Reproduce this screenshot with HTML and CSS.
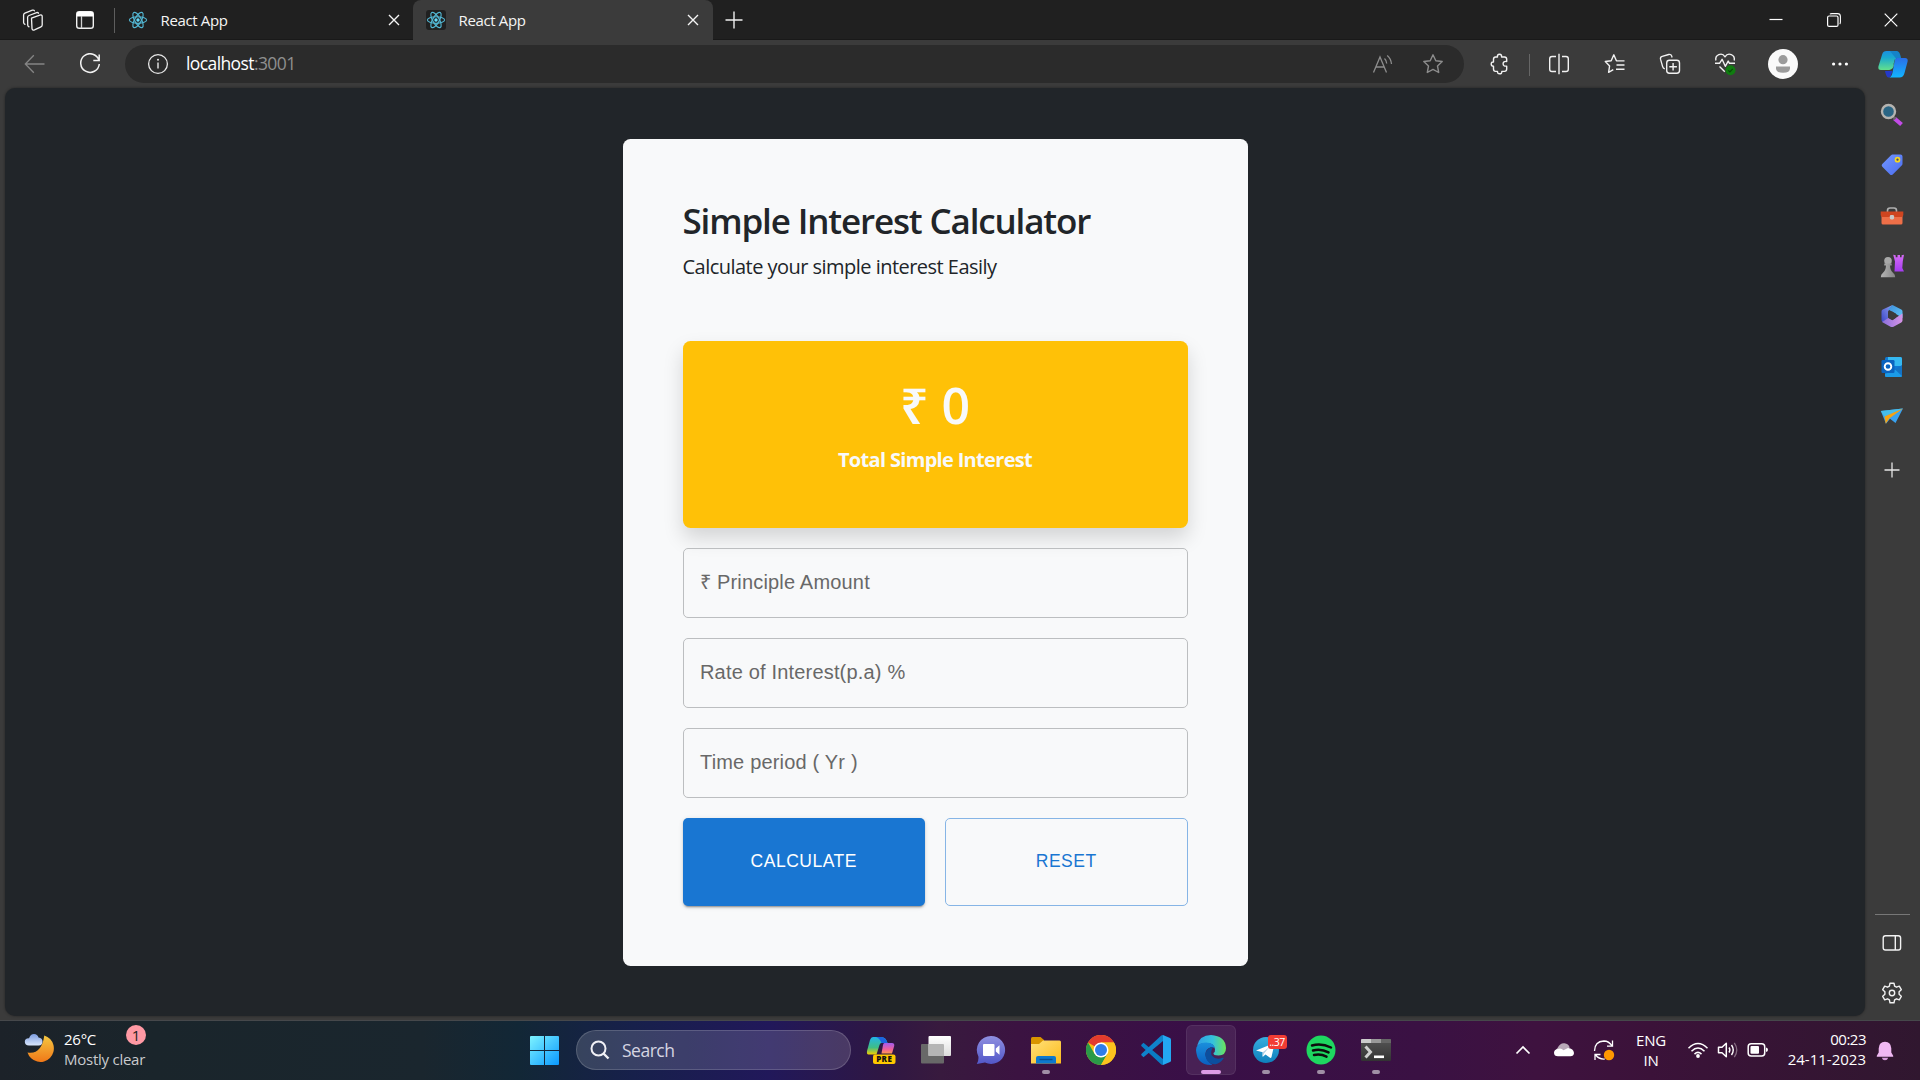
FILE: index.html
```html
<!DOCTYPE html>
<html lang="en">
<head>
<meta charset="utf-8">
<title>React App</title>
<link rel="stylesheet" href="styles.css">
</head>
<body>
<svg class="defs" width="0" height="0" aria-hidden="true">
  <defs>
    <linearGradient id="g-teal" x1="0" y1="0" x2="0" y2="1"><stop offset="0" stop-color="#1a8fe0"/><stop offset=".35" stop-color="#19a9cf"/><stop offset="1" stop-color="#63e08c"/></linearGradient>
    <linearGradient id="g-blue" x1="0" y1="0" x2="0" y2="1"><stop offset="0" stop-color="#2a6ee8"/><stop offset="1" stop-color="#12b5ff"/></linearGradient>
    <linearGradient id="g-pink" x1="0" y1="0" x2="0" y2="1"><stop offset="0" stop-color="#a25bf0"/><stop offset=".6" stop-color="#f0609a"/><stop offset="1" stop-color="#ff9a52"/></linearGradient>
    <linearGradient id="g-rain" x1="0" y1="0" x2="0" y2="1"><stop offset="0" stop-color="#22b5e8"/><stop offset=".6" stop-color="#3fbd86"/><stop offset="1" stop-color="#f5d000"/></linearGradient>
    <linearGradient id="g-win" x1="0" y1="0" x2="1" y2="1"><stop offset="0" stop-color="#7df3ff"/><stop offset="1" stop-color="#0a98ff"/></linearGradient>
    <linearGradient id="g-moon" x1="0" y1="0" x2="0" y2="1"><stop offset="0" stop-color="#f5c842"/><stop offset="1" stop-color="#f07818"/></linearGradient>
    <linearGradient id="g-cloud" x1="0" y1="0" x2="0" y2="1"><stop offset="0" stop-color="#7d9de0"/><stop offset="1" stop-color="#d9e6fb"/></linearGradient>
    <linearGradient id="g-tag" x1="0" y1="0" x2="1" y2="1"><stop offset="0" stop-color="#7397ff"/><stop offset="1" stop-color="#4a6cf0"/></linearGradient>
    <linearGradient id="g-pawn" x1="0" y1="0" x2="1" y2="0"><stop offset="0" stop-color="#b5b5b5"/><stop offset="1" stop-color="#858585"/></linearGradient>
    <linearGradient id="g-rook" x1="0" y1="0" x2="0" y2="1"><stop offset="0" stop-color="#d66cf5"/><stop offset="1" stop-color="#a43cf0"/></linearGradient>
    <linearGradient id="g-chat" x1="0" y1="0" x2="0" y2="1"><stop offset="0" stop-color="#8f8fe0"/><stop offset="1" stop-color="#5257c8"/></linearGradient>
    <linearGradient id="g-folder" x1="0" y1="0" x2="1" y2="1"><stop offset="0" stop-color="#ffe07a"/><stop offset="1" stop-color="#fcbc1c"/></linearGradient>
    <linearGradient id="g-edge" x1="0" y1="0" x2="1" y2="0"><stop offset="0" stop-color="#2f9fe6"/><stop offset=".55" stop-color="#35c2dc"/><stop offset="1" stop-color="#6ce35a"/></linearGradient>
    <linearGradient id="g-edge2" x1="0" y1="0" x2="0" y2="1"><stop offset="0" stop-color="#1a8fdc"/><stop offset="1" stop-color="#0a5fc0"/></linearGradient>
    <linearGradient id="g-tg" x1="0" y1="0" x2="0" y2="1"><stop offset="0" stop-color="#38aede"/><stop offset="1" stop-color="#0e80bd"/></linearGradient>
    <linearGradient id="g-term" x1="0" y1="0" x2="0" y2="1"><stop offset="0" stop-color="#555"/><stop offset="1" stop-color="#333"/></linearGradient>
    <linearGradient id="g-white" x1="0" y1="0" x2="0" y2="1"><stop offset="0" stop-color="#fff"/><stop offset="1" stop-color="#dcdcdc"/></linearGradient>
    <linearGradient id="g-m1" x1="0" y1="1" x2="1" y2="0"><stop offset="0" stop-color="#3b46c8"/><stop offset="1" stop-color="#8fa0ee"/></linearGradient>
    <linearGradient id="g-m2" x1="0" y1="0" x2="1" y2="1"><stop offset="0" stop-color="#3c8ddc"/><stop offset="1" stop-color="#62c8f6"/></linearGradient>
    <linearGradient id="g-m3" x1="0" y1="0" x2="1" y2="0"><stop offset="0" stop-color="#8a6fdc"/><stop offset="1" stop-color="#d694e6"/></linearGradient>
    <symbol id="react" viewBox="0 0 20 20">
      <g fill="none" stroke="#53b7d3" stroke-width="1.15"><ellipse cx="10" cy="10" rx="8.6" ry="3.3"/><ellipse cx="10" cy="10" rx="8.6" ry="3.3" transform="rotate(60 10 10)"/><ellipse cx="10" cy="10" rx="8.6" ry="3.3" transform="rotate(120 10 10)"/></g>
      <circle cx="10" cy="10" r="1.7" fill="#61dafb"/>
    </symbol>
    <symbol id="close" viewBox="0 0 12 12"><path d="M1 1l10 10M11 1L1 11" fill="none" stroke="currentColor" stroke-width="1.4"/></symbol>
    <symbol id="star" viewBox="0 0 22 22"><path d="M11 1.8l2.8 5.9 6.4.8-4.7 4.5 1.2 6.5L11 16.4l-5.7 3.1 1.2-6.5L1.8 8.500l6.400-.8z" fill="none" stroke="#8d8d8d" stroke-width="1.4" stroke-linejoin="round"/></symbol>
  </defs>
</svg>

<header class="tabstrip">
  <div class="cell strip-a"><svg width="22" height="22" viewBox="0 0 22 22"><g fill="none" stroke="#f0f0f0" stroke-width="1.3" stroke-linejoin="round" stroke-linecap="round"><path d="M9.500 9.200l8.300-3.100q2.400-.6 2.400 1.500v8.300q0 1.400-1.300 2l-6.400 2.900q-2.200.8-2.500-1.200z"/><path d="M7 17.800q-1.200-.5-1.300-1.700L5.600 8.500q0-1.400 1.400-2L14.600 3.600q1.300-.3 1.900.6"/><path d="M3 15.300q-1.300-.5-1.400-1.800V6q0-1.300 1.300-1.900L10.400 1.200q1.500-.4 2 .6"/></g></svg></div>
  <div class="cell strip-b"><svg width="20" height="20" viewBox="0 0 20 20"><rect x="1.700" y="1.700" width="16.600" height="16.600" rx="2.600" fill="none" stroke="#f0f0f0" stroke-width="1.400"/><path d="M1.700 6.500V4q0-2.300 2.300-2.300h12q2.300 0 2.300 2.300v2.500z" fill="#fff"/><path d="M6.500 6v12" stroke="#cfcfcf" stroke-width="1.300"/></svg></div>
  <i class="strip-line"></i>
  <div class="tab">
    <span class="favicon"><svg width="20" height="20"><use href="#react"/></svg></span>
    <span class="tab-name">React App</span>
    <svg class="tab-x" width="12" height="12"><use href="#close"/></svg>
  </div>
  <div class="tab active">
    <span class="favicon"><svg width="20" height="20"><use href="#react"/></svg></span>
    <span class="tab-name">React App</span>
    <svg class="tab-x" width="12" height="12"><use href="#close"/></svg>
  </div>
  <div class="cell new-tab"><svg width="18" height="18"><path d="M9 .5v17M.5 9h17" stroke="#f0f0f0" stroke-width="1.4"/></svg></div>
  <div class="win-buttons">
    <svg width="14" height="14"><path d="M.5 6.500h13" stroke="#fff" stroke-width="1.200"/></svg>
    <svg width="14" height="14"><rect x=".6" y="3" width="10.400" height="10.400" rx="1.500" fill="none" stroke="#fff" stroke-width="1.200"/><path d="M3 1.200Q3.300.6 5 .6h5.500q2.900 0 2.900 2.900V9q0 1.500-.7 2" fill="none" stroke="#fff" stroke-width="1.100"/></svg>
    <svg width="14" height="14"><path d="M.7.7l12.600 12.600M13.300.7L.7 13.300" stroke="#fff" stroke-width="1.200"/></svg>
  </div>
</header>

<nav class="toolbar">
  <div class="cell nav-back"><svg width="22" height="20"><path d="M20.500 10H1.500M9.800 1.300L1.300 10l8.500 8.700" fill="none" stroke="#858585" stroke-width="1.300"/></svg></div>
  <div class="cell nav-reload"><svg width="22" height="22"><path d="M20 7.500A9.300 9.300 0 1 0 20.300 11M20.200 1.600v6h-5.900" fill="none" stroke="#f2f2f2" stroke-width="1.500"/></svg></div>
  <div class="address">
    <svg width="22" height="22"><circle cx="11" cy="11" r="9.400" fill="none" stroke="#e8e8e8" stroke-width="1.300"/><path d="M11 9.500v6" stroke="#e8e8e8" stroke-width="1.400"/><circle cx="11" cy="6.700" r="1" fill="#e8e8e8"/></svg>
    <span class="url">localhost<span class="port">:3001</span></span>
    <svg class="read-aloud" width="22" height="20"><path d="M1.500 18.500L8 3l6.500 15.500M4 13h8" fill="none" stroke="#8d8d8d" stroke-width="1.300"/><path d="M12.500 4.500q2 1.800 2.200 5M15.200 1.500q3.600 2.800 4.300 8.500" fill="none" stroke="#8d8d8d" stroke-width="1.300"/></svg>
    <svg class="fav" width="22" height="22"><use href="#star"/></svg>
  </div>
  <div class="tools">
    <div class="cell c-ext"><svg width="20" height="22"><path d="M5.500 4h2q-.5-2.700 2-2.700T11.500 4h3q2.200 0 2.200 2.200V8.500q-3.600-.5-3.600 2.300t3.600 2.300v3q0 2.300-2.200 2.300h-2.700q.3 2.400-2.100 2.400t-2.200-2.400h-2q-2 0-2-2.300v-2.900Q1.200 13.200 1.200 11t2.300-2V6.200Q3.500 4 5.500 4z" fill="none" stroke="#f2f2f2" stroke-width="1.400" stroke-linejoin="round"/></svg></div>
    <i class="tool-line"></i>
    <div class="cell c-split"><svg width="22" height="22"><path d="M8 3.500H4Q1.700 3.500 1.700 5.800v10.400q0 2.300 2.300 2.300h4M14 3.500h4q2.300 0 2.300 2.300v10.400q0 2.300-2.300 2.300h-4M11 .8v20.400" fill="none" stroke="#f2f2f2" stroke-width="1.400"/></svg></div>
    <div class="cell c-list"><svg width="22" height="22"><path d="M13 7.800h-.6L9.800 1.800 7.200 7.700 1.300 8.500l4.300 4.400-1 6.400 4.700-2.600M13 7.900h7.500M12.500 12h8M12 16.300h8.500" fill="none" stroke="#f2f2f2" stroke-width="1.400" stroke-linejoin="round"/></svg></div>
    <div class="cell c-coll"><svg width="22" height="22"><path d="M5.800 15.800Q4 15.300 3.600 13.500L1.500 6.200Q1 4 3.200 3.300L9.700 1.500q2.300-.5 3 1.500l.4 1.500" fill="none" stroke="#f2f2f2" stroke-width="1.300"/><rect x="7.700" y="7.200" width="12.800" height="13" rx="2.700" fill="none" stroke="#f2f2f2" stroke-width="1.400"/><path d="M14.100 9.900v7.600M10.300 13.700h7.600" stroke="#f2f2f2" stroke-width="1.400"/></svg></div>
    <div class="cell c-heart"><svg width="22" height="24"><path d="M1.900 8.500C.7 3 7.800-.4 11 4.800 14.300-.4 21.400 3 20.200 8.500M5.500 14.500l5.300 5.300M1 11.300h4.500l2.600-4 3.200 7 2.900-5.200 1.300 2.200H21" fill="none" stroke="#f2f2f2" stroke-width="1.400" stroke-linejoin="round"/><circle cx="16.500" cy="18.300" r="5" fill="#107c10"/><path d="M14.300 18.300l1.600 1.600 2.800-3" fill="none" stroke="#064a06" stroke-width="1.200"/></svg></div>
    <div class="cell c-user"><svg width="30" height="30"><circle cx="15" cy="15" r="15" fill="#fafafa"/><circle cx="15" cy="10.700" r="4.600" fill="#9b9b9b"/><path d="M8 17.500h14v1.800q0 4.500-7 4.500t-7-4.500z" fill="#9b9b9b"/></svg></div>
    <div class="cell c-more"><svg width="18" height="6"><circle cx="2.600" cy="3" r="1.600" fill="#fff"/><circle cx="9" cy="3" r="1.600" fill="#fff"/><circle cx="15.400" cy="3" r="1.600" fill="#fff"/></svg></div>
    <div class="cell c-pilot"><svg width="32" height="28"><path d="M9.500 1h9Q21 1 20.500 4l-3.700 12q-1.300 4-5 4H4Q.8 20 1.400 16.500L5.200 4.300Q6.200 1 9.500 1z" fill="url(#g-teal)"/><path d="M13 1h7q2.400.5 3.300 4l.8 3h-5.500z" fill="#1583c8"/><path d="M18.200 8.300L16 16q-1 3.800-3.200 4h1.600l3.400-8z" fill="#3b3b3b"/><path d="M19.500 8H28q3.300 0 2.600 3.500L27.500 23q-1.200 4.500-5 4.500H12q2.400-.5 3.300-4l2.400-12Q18 8.500 19.500 8z" fill="url(#g-blue)"/><path d="M8 21h7.500l-1.600 4.600Q12.600 28 11 27.400 9 26.500 8 21z" fill="#2439c8"/></svg></div>
  </div>
</nav>

<div class="browser-body">
  <main class="page">
    <section class="card">
      <h1>Simple Interest Calculator</h1>
      <p class="lead">Calculate your simple interest Easily</p>
      <div class="total">
        <h2>₹ 0</h2>
        <p>Total Simple Interest</p>
      </div>
      <div class="field">₹ Principle Amount</div>
      <div class="field">Rate of Interest(p.a) %</div>
      <div class="field">Time period ( Yr )</div>
      <div class="actions">
        <button class="btn primary" type="button">CALCULATE</button>
        <button class="btn outline" type="button">RESET</button>
      </div>
    </section>
  </main>
  <aside class="sidebar">
    <div class="side-item"><svg width="24" height="24"><path d="M14.500 15.500l7 6" stroke="#c34be8" stroke-width="4.200"/><path d="M13.300 14l2.200 2" stroke="#666" stroke-width="2.500"/><circle cx="8.500" cy="8.500" r="6.500" fill="#2a6584" stroke="#b5b3b0" stroke-width="2.400"/></svg></div>
    <div class="side-item"><svg width="24" height="24"><path d="M12.500 1.500h8q2 0 2 2v7.200q0 1-.8 1.800l-9 9q-1.400 1.200-2.700 0l-7.700-7.800q-1.300-1.400 0-2.700l8.700-8.800q.7-.7 1.500-.7z" fill="url(#g-tag)"/><circle cx="17.500" cy="6.700" r="2" fill="#44496b" stroke="#f5d622" stroke-width="1.700"/></svg></div>
    <div class="side-item"><svg width="24" height="24"><path d="M7.500 8V6.500Q7.500 4 10 4h4q2.500 0 2.500 2.500V8" fill="none" stroke="#b0b0b0" stroke-width="1.600"/><rect x="1.500" y="8" width="21" height="12.500" rx="1.500" fill="#ee6f48"/><path d="M.7 7.500h22.600v3.600q0 2-2 2H2.700q-2 0-2-2z" fill="#cf4520"/><rect x="9.800" y="11" width="4.300" height="4.500" rx="1.400" fill="#c9c9c9"/></svg></div>
    <div class="side-item"><svg width="24" height="24"><path d="M13.200.8l2.500.5v1.900h1.800V1h2.500v2.200h1.600V1.300L24 .8l-1.200 6.400-.5 6.700L24 17.500h-9.500l.5-10z" fill="url(#g-rook)"/><circle cx="8" cy="6.800" r="3.800" fill="#a8a8a8"/><path d="M4.300 9.600h7.400v2H10q.2 5 3.200 7.500 2 1.500 2 4.200H.8q0-2.700 2-4.200Q5.800 16.600 6 11.600H4.300z" fill="url(#g-pawn)"/></svg></div>
    <div class="side-item"><svg width="24" height="24"><path d="M12.500 1L8 7.500v7L2.500 18q-1-.8-1-2.300V7.500q0-1.300 1.200-2z" fill="url(#g-m1)"/><path d="M12.500 1L21.300 5.600q1.200.7 1.200 2v6.500L16 10 8 5.200z" fill="url(#g-m2)"/><path d="M22.500 9.500v7q0 1.200-1.200 2l-7.800 4.200q-1.500.7-3 0L2 18l6.500-4.200 4 2.200z" fill="url(#g-m3)"/><path d="M11.800 7.300l4.200 2.500v4l-3.700 2.500-4-2.300V9.300z" fill="#3b3b3b"/></svg></div>
    <div class="side-item"><svg width="24" height="24"><rect x="5" y="2" width="17" height="20" rx="1.500" fill="#0f78d4"/><path d="M8 2h12.500Q22 2 22 3.500V11H8z" fill="#35b8f1"/><path d="M5 19l17-7v8.500q0 1.500-1.500 1.500h-14Q5 22 5 20.500z" fill="#1b9be8"/><path d="M15 14.500l7-4.500v11z" fill="#1373c6"/><rect x="1.500" y="5" width="13" height="13" rx="1.300" fill="#0b63bf"/><circle cx="8" cy="11.500" r="3.300" fill="none" stroke="#fff" stroke-width="1.900"/></svg></div>
    <div class="side-item"><svg width="24" height="24"><path d="M.8 6L23 3.500 15.500 18 10 13.700l-4 5z" fill="#39a2f0"/><path d="M.8 6L23 3.500 4.500 11.500z" fill="#46bdea"/><path d="M4.500 11.500L23 3.500 9.300 13.400 5.700 18.700z" fill="#f5a313"/></svg></div>
    <div class="side-item side-add"><svg width="16" height="16"><path d="M8 .5v15M.5 8h15" stroke="#e6e6e6" stroke-width="1.300"/></svg></div>
    <i class="side-line"></i>
    <div class="side-item side-low"><svg width="20" height="18"><rect x="1.200" y="1.700" width="17.400" height="14.300" rx="2.300" fill="none" stroke="#f2f2f2" stroke-width="1.400"/><path d="M13.300 2v14" stroke="#f2f2f2" stroke-width="1.400"/></svg></div>
    <div class="side-item side-low"><svg width="22" height="22" viewBox="0 0 22 22"><path d="M9 1.200h4l.6 2.900 1.900 1.100 2.800-1 2 3.500-2.200 2v2.600l2.200 2-2 3.500-2.800-1-1.900 1.100-.6 2.900H9l-.6-2.900-1.900-1.100-2.800 1-2-3.500 2.200-2V9.700l-2.200-2 2-3.500 2.800 1 1.900-1.100z" fill="none" stroke="#f2f2f2" stroke-width="1.400" stroke-linejoin="round"/><circle cx="11" cy="11" r="2.700" fill="none" stroke="#f2f2f2" stroke-width="1.400"/></svg></div>
  </aside>
</div>

<footer class="taskbar">
  <div class="weather">
    <svg width="30" height="30"><path d="M20.300 2.500a13.500 13.500 0 1 1-16.800 17q14 2.500 16.800-17z" fill="url(#g-moon)"/><path d="M5 12.500q-4.200 0-4.200-3.700T5 5.300Q6.500 1 10 1t4.500 3.500q4 .5 4 4.300 0 3.700-3.800 3.700z" fill="url(#g-cloud)"/></svg>
    <div class="weather-text"><span class="temp">26°C</span><span class="sky">Mostly clear</span></div>
    <b class="count">1</b>
  </div>
  <div class="start">
    <svg class="win" width="29" height="29"><path d="M0 1q0-1 1-1h13v14H0zM15 0h13q1 0 1 1v13H15zM0 15h14v14H1q-1 0-1-1zM15 15h14v13q0 1-1 1H15z" fill="url(#g-win)"/></svg>
    <div class="search"><svg width="20" height="20"><circle cx="8.500" cy="8.500" r="7" fill="none" stroke="#f0f0f5" stroke-width="2"/><path d="M13.500 13.500l5 5" stroke="#f0f0f5" stroke-width="2.400"/></svg><span>Search</span></div>
    <div class="app"><svg width="30" height="30"><path d="M7 2h8q5 0 6.500 6h-6q-1.500 0-2 2l-3 9.500H2.500Q.5 19.500 1 16L4 5Q5 2 7 2z" fill="url(#g-rain)"/><path d="M10 2h5.500q4.500.5 6 6h-6q-2-5-5.500-6z" fill="#1b65e0"/><path d="M18.500 8H26q2.700 0 2.200 3L26 18.500H15.500L17 10q.4-2 1.500-2z" fill="url(#g-pink)"/><rect x="7" y="19.500" width="22.500" height="9.500" rx="2" fill="#ffc800"/><text x="18.200" y="27.200" text-anchor="middle" class="pre">PRE</text></svg></div>
    <div class="app"><svg width="30" height="30"><rect x="0" y="9" width="23" height="19.500" rx="1" fill="#686868"/><rect x="7.500" y="1" width="22.500" height="20" rx="1" fill="url(#g-white)"/><path d="M7.500 9H22q1 0 1 1v11H7.500z" fill="#b5b5b5"/></svg></div>
    <div class="app"><svg width="30" height="30"><path d="M15 1a14 14 0 1 1-6 26.600L.8 29q2-2.800 1.600-7.500A14 14 0 0 1 15 1z" fill="url(#g-chat)"/><rect x="7" y="9" width="11.500" height="12" rx="1" fill="#fff"/><path d="M19.800 13.500l3.700-3.300v9.600l-3.700-3.300z" fill="#fff"/></svg></div>
    <div class="app run"><svg width="30" height="30"><path d="M0 3.500Q0 2 1.500 2h8L13 5v5H0z" fill="#d99500"/><path d="M12 5.500h16.500Q30 5.500 30 7v21.500H0V9h8z" fill="url(#g-folder)"/><path d="M5 28.500V23q0-2 2-2h16q2 0 2 2v5.500z" fill="#0d79ce"/><path d="M8.500 24.500h13" stroke="#084f92" stroke-width="1.400"/></svg></div>
    <div class="app"><svg width="30" height="30"><circle cx="15" cy="15" r="15" fill="#f9bf12"/><path d="M15 15L2 7.500A15 15 0 0 1 28 7.500H15z" fill="#e33b2e"/><path d="M2 7.500A15 15 0 0 0 15 30l6.500-11.300L15 15 8.500 18.700z" fill="#2a9a48"/><path d="M15 7.500h13A15 15 0 0 1 15 30l6.500-11.300z" fill="#fcc31e"/><circle cx="15" cy="15" r="7.500" fill="#fff"/><circle cx="15" cy="15" r="6" fill="#2f7de9"/></svg></div>
    <div class="app"><svg width="30" height="30"><path d="M2.500 7.800L22 24v6q-1.200 0-2-.8L.6 11.300q-.8-.8 0-1.700z" fill="#0a7cc4"/><path d="M2.500 22.200L22 6V0q-1.200 0-2 .8L.6 18.700q-.8.800 0 1.700z" fill="#0f83cc"/><path d="M22 0l7 3q1 .5 1 1.500v21q0 1-1 1.500l-7 3z" fill="#23a8f2"/></svg></div>
    <div class="app run focus"><svg width="30" height="30"><path d="M1 11Q3.500 0 15 0q14.500 1 15 13 0 7.500-7.500 7.500-5.500 0-5-2.500 1.800-1 1.500-4Q18 8 11 8 4 8 1 11z" fill="url(#g-edge)"/><path d="M0 15Q.5 7.500 10 7.500q8 0 9 6-1.500-1.500-4-1.300Q9 14 9.500 20q.8 6 7 9.800Q1 31 0 15z" fill="url(#g-edge2)"/><path d="M15 12.200Q8.500 15 9.500 21.500q2 8 10 7.700 5-1.200 8-5.700.4-1-.8-.7-7 2.500-10.700-2-2.200-3 1-8.600z" fill="#0c4f9e"/></svg></div>
    <div class="app run"><svg width="30" height="30"><circle cx="15" cy="15" r="13" fill="url(#g-tg)"/><path d="M5 15.500L22 8.700q1.500-.4 1.200 1.200L20.500 22q-.5 1.500-1.800.6L14.500 19.500l-2.300 2q-.7.500-.7-.6l.2-3.700z" fill="#fff"/><path d="M11.700 17.200l7-5.500-5.500 6.500-1.300 3z" fill="#b5d3e6"/></svg><b class="chip">..37</b></div>
    <div class="app run"><svg width="30" height="30"><circle cx="15" cy="15" r="14.500" fill="#1ed760"/><path d="M6 10.500q9.500-2.700 19 2M7 15.500q8-2.200 15.500 1.900M8 20q6.500-1.600 12.500 1.600" fill="none" stroke="#0d0d0d" stroke-width="2.500" stroke-linecap="round"/></svg></div>
    <div class="app run"><svg width="30" height="30"><rect y="4" width="30" height="22" rx="1.200" fill="url(#g-term)"/><path d="M0 8V5q0-1 1-1h9v4z" fill="#ccc"/><path d="M10 4h10v4H10z" fill="#999"/><path d="M20 4h9q1 0 1 1v3H20z" fill="#666"/><path d="M4.500 11.500l5 5.500-5 5.500" fill="none" stroke="#d0d0d0" stroke-width="3"/><path d="M13 21.800h10" stroke="#fff" stroke-width="2.600"/></svg></div>
  </div>
  <div class="tray">
    <svg class="up" width="16" height="10"><path d="M1.500 8.500l6.500-6.500 6.500 6.500" fill="none" stroke="#fff" stroke-width="1.700"/></svg>
    <svg class="cloud" width="22" height="16"><path d="M4 12Q1 9 4.500 6 7 .8 11.500 1.300q4 .4 5.200 4.300L10 12z" fill="#b9a9b8"/><path d="M5 14.300Q1 14.300 1 10.800q0-3 3.600-3.800Q8 5.500 10.500 8.300L15 6q5.500.5 6 5-.3 3.300-3.500 3.300z" fill="#fff"/></svg>
    <svg class="sync" width="22" height="22"><path d="M1.500 12Q1.500 2.500 11 2q4.800 0 8.200 5M19.500 1.500v5.700h-5.500M7.500 15.500H2v5.500M2.700 16q3.500 4.500 9 4" fill="none" stroke="#fff" stroke-width="1.300"/><circle cx="16" cy="16" r="5.200" fill="#ff9800"/></svg>
    <div class="lang"><span>ENG</span><span>IN</span></div>
    <svg class="wifi" width="22" height="18"><g fill="none" stroke="#fff" stroke-width="1.500"><path d="M1.500 7.200q9.500-9.500 19 0M4.500 10.300q6.500-6.500 13 0M7.500 13.100q3.500-3.500 7 0"/></g><circle cx="11" cy="15" r="1.900" fill="#fff"/></svg>
    <svg class="vol" width="22" height="18"><path d="M1.500 6.300H5L9.300 2.200v13.600L5 11.700H1.500z" fill="none" stroke="#fff" stroke-width="1.500" stroke-linejoin="round"/><path d="M12 6.500q1.800 2.500 0 5M14.500 4q3.500 5 0 10" fill="none" stroke="#fff" stroke-width="1.400"/><path d="M17.300 1.800q5 7.200 0 14.400" fill="none" stroke="#856b80" stroke-width="1.300"/></svg>
    <svg class="bat" width="22" height="16"><rect x="1.200" y="1.700" width="16.500" height="12.300" rx="3" fill="none" stroke="#fff" stroke-width="1.500"/><rect x="3.500" y="4" width="8.500" height="7.700" rx="1" fill="#fff"/><path d="M19 5.500q2 .3 2 2.300t-2 2.300z" fill="#fff"/></svg>
    <div class="clock"><span class="time">00:23</span><span>24-11-2023</span></div>
    <svg class="bell" width="18" height="20"><path d="M9 .8q6 .2 6.300 6.500v4.200l1.900 3.300v.9H.8v-.9l1.900-3.300V7.300Q3 1 9 .8z" fill="#f0b8f3"/><path d="M5.800 16.700h6.400q-.8 2.600-3.200 2.600t-3.200-2.600z" fill="#d79bdc"/></svg>
  </div>
</footer>
</body>
</html>
```
FILE: styles.css
```css
* { box-sizing: border-box; }
body {
  margin: 0;
  width: 1920px;
  height: 1080px;
  overflow: hidden;
  display: flex;
  flex-direction: column;
  background: #3b3b3b;
  color: #fff;
  font-family: "Open Sans", "Noto Sans", sans-serif;
}
.defs { position: absolute; }
svg { display: block; flex: none; }
h1, h2, p { margin: 0; }
.cell { display: flex; align-items: center; justify-content: center; flex: none; }

/* tab strip */
.tabstrip { display: flex; height: 40px; flex: none; background: #202020; box-shadow: inset 0 -1px 0 #191919; }
.strip-a { width: 65px; }
.strip-b { width: 40px; }
.strip-line { width: 1px; height: 25px; margin: 8px 0 0 9px; background: #5e5e5e; }
.tab { display: flex; align-items: center; width: 298px; padding: 0 13px; color: #f5f5f5; }
.tab.active { width: 300px; padding-right: 14px; background: #3b3b3b; border-radius: 8px 8px 0 0; }
.favicon { display: flex; align-items: center; justify-content: center; width: 20px; height: 20px; border-radius: 3px; background: #202020; }
.tab-name { margin-left: 12.500px; font-size: 15px; line-height: 20px; letter-spacing: -0.35px; white-space: nowrap; padding-bottom: 1px; }
.tab-x { margin-left: auto; }
.new-tab { width: 42px; }
.win-buttons { display: flex; align-items: center; gap: 43.500px; margin-left: auto; padding-right: 22px; }

/* toolbar */
.toolbar { display: flex; align-items: flex-start; height: 48px; flex: none; padding-top: 5px; background: #3b3b3b; }
.toolbar .cell { height: 38px; }
.nav-back { width: 70px; }
.nav-reload { width: 40px; }
.address { display: flex; align-items: center; width: 1341px; height: 38px; margin-left: 15px; padding: 0 20px 0 22px; border-radius: 19px; background: #2b2b2b; }
.url { margin-left: 17px; padding-bottom: 2px; font-size: 17.5px; line-height: 24px; letter-spacing: -0.6px; color: #fff; }
.port { color: #8f8f8f; }
.read-aloud { margin-left: auto; }
.fav { margin-left: 28px; }
.tools { display: flex; flex: 1; }
.c-ext { width: 72px; }
.tool-line { width: 1px; height: 22px; margin: 9px 0 0 -7px; background: #666; }
.c-split { width: 58px; }
.c-list { width: 54px; }
.c-coll { width: 56px; }
.c-heart { width: 54px; }
.c-user { width: 62px; }
.c-more { width: 52px; }
.c-pilot { width: 54px; }

/* page and sidebar */
.browser-body { display: flex; height: 933px; flex: none; padding: 0 0 4px 5px; border-bottom: 1px solid #46484b; }
.page { display: flex; justify-content: center; align-items: flex-start; width: 1860px; padding-top: 51px; border-radius: 10px; background: #212529; box-shadow: 0 0 3px rgba(0, 0, 0, .4); }
.card { display: flex; flex-direction: column; width: 625px; height: 827px; padding: 60px; border-radius: 7.5px; background: #f8f9fa; color: #212529; }
.card h1 { font-size: 35px; line-height: 42px; font-weight: 600; letter-spacing: -1.15px; white-space: nowrap; margin-top: 1px; }
.lead { margin-top: 10px; font-size: 20px; line-height: 30px; letter-spacing: -0.53px; white-space: nowrap; }
.total { display: flex; flex-direction: column; align-items: center; height: 187px; margin-top: 59px; padding-top: 34px; border-radius: 7.5px; background: #ffc107; color: #f8f9fa; box-shadow: 0 10px 20px rgba(0, 0, 0, .15); }
.total h2 { font-size: 50px; line-height: 60px; font-weight: 600; }
.total p { margin-top: 10px; font-size: 20px; line-height: 30px; font-weight: 700; letter-spacing: -0.68px; }
.field { display: flex; align-items: center; height: 70px; margin-top: 20px; padding: 0 16.5px 1px; border: 1px solid #bcbec0; border-radius: 5px; color: #686868; font: 20px/29px "Liberation Sans", sans-serif; letter-spacing: .18px; }
.actions { display: grid; grid-template-columns: 1fr 1fr; gap: 20px; margin-top: 20px; }
.btn { height: 88px; padding: 0 0 2px; border: 0; border-radius: 5px; font: 17.5px/30px "Liberation Sans", sans-serif; letter-spacing: .5px; }
.primary { background: #1976d2; color: #fff; box-shadow: 0 3px 1px -2px rgba(0, 0, 0, .2), 0 2px 2px rgba(0, 0, 0, .14), 0 1px 5px rgba(0, 0, 0, .12); }
.outline { background: transparent; border: 1px solid #86b5e6; color: #1976d2; }
.sidebar { display: flex; flex-direction: column; align-items: center; width: 54px; }
.side-item { display: flex; align-items: center; justify-content: center; height: 50.3px; flex: none; }
.side-item:first-child { margin-top: 2px; }
.side-add { height: 56px; }
.side-line { width: 35px; height: 1px; margin-top: auto; background: #777; }
.side-low { height: 50px; }
.side-line + .side-low { margin-top: 3px; }
.side-low:last-child { margin-bottom: -2px; }

/* taskbar */
.taskbar { position: relative; display: flex; height: 59px; flex: none; background: linear-gradient(90deg, #1c2229 0, #1a252b 8%, #1a262e 22%, #122736 27%, #17204b 33%, #21185a 40%, #2f1743 46%, #381a3e 49%, #3b1341 53%, #390f47 62%, #3a1143 74%, #3e123f 80%, #3b1239 86%, #30172f 100%); }
.weather { display: flex; width: 530px; padding: 12px 0 0 24px; }
.weather-text { display: flex; flex-direction: column; margin: -4px 0 0 10px; font-size: 15px; line-height: 20px; letter-spacing: -0.25px; white-space: nowrap; }
.sky { color: #c9cacd; }
.count { width: 20px; height: 20px; margin: -8px 0 0 -19px; border-radius: 50%; background: #ff99a4; color: #222; font-size: 15px; line-height: 20px; font-weight: 400; text-align: center; }
.start { display: flex; }
.win { margin-top: 15px; }
.search { display: flex; align-items: center; width: 275px; height: 40px; margin: 9px 2px 0 17px; padding-left: 13px; border: 1px solid rgba(255, 255, 255, .16); border-radius: 20px; background: rgba(255, 255, 255, .15); color: #d5d5e2; font-size: 17.5px; letter-spacing: -0.5px; }
.search span { margin-left: 12px; }
.app { position: relative; display: flex; flex-direction: column; align-items: center; width: 50px; height: 50px; margin: 4px 2.5px 0; padding-top: 10px; border-radius: 6px; }
.app.focus { background: rgba(255, 255, 255, .08); box-shadow: inset 0 0 0 1px rgba(255, 255, 255, .07); }
.run::after { content: ""; width: 8px; height: 4px; margin-top: 5px; border-radius: 2px; background: #a08fa6; }
.run.focus::after { width: 20px; background: #dd9be5; }
.pre { font: 800 8px "Open Sans", sans-serif; letter-spacing: .4px; fill: #111; }
.chip { position: absolute; right: 4px; top: 10px; width: 19px; height: 14px; border-radius: 3px; background: #f23c34; color: #fff; font-size: 10.5px; line-height: 14px; font-weight: 400; text-align: center; letter-spacing: -0.5px; }
.tray { display: flex; flex: 1; font-size: 15px; line-height: 20px; }
.up { margin: 24px 0 0 112px; }
.cloud { margin: 21px 0 0 22px; }
.sync { margin: 18px 0 0 18px; }
.lang { display: flex; flex-direction: column; align-items: center; width: 40px; margin: 8.5px 0 0 16px; letter-spacing: -0.2px; }
.wifi { margin: 20px 0 0 16px; }
.vol { margin: 20px 0 0 8px; }
.bat { margin: 21px 0 0 8px; }
.clock { display: flex; flex-direction: column; align-items: flex-end; margin: 8px 0 0 auto; }
.time { letter-spacing: -0.5px; }
.bell { margin: 20px 26px 0 10px; }
```
